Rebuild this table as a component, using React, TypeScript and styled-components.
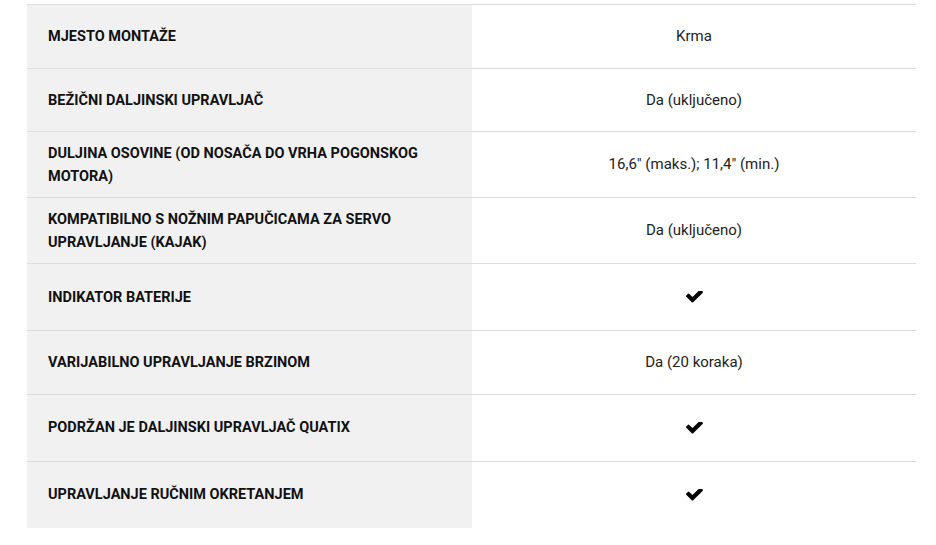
import React from "react";
import styled, { createGlobalStyle } from "styled-components";

const GlobalStyle = createGlobalStyle`
  body {
    margin: 0;
    background: #fff;
    font-family: Roboto, "Liberation Sans", Arial, sans-serif;
  }
`;

type Spec = { label: string; value?: string; check?: boolean };

const specs: Spec[] = [
  { label: "Mjesto montaže", value: "Krma" },
  { label: "Bežični daljinski upravljač", value: "Da (uključeno)" },
  { label: "Duljina osovine (od nosača do vrha pogonskog motora)", value: "16,6\" (maks.); 11,4\" (min.)" },
  { label: "Kompatibilno s nožnim papučicama za servo upravljanje (kajak)", value: "Da (uključeno)" },
  { label: "Indikator baterije", check: true },
  { label: "Varijabilno upravljanje brzinom", value: "Da (20 koraka)" },
  { label: "Podržan je daljinski upravljač Quatix", check: true },
  { label: "Upravljanje ručnim okretanjem", check: true },
];

const CheckIcon = () => (
  <svg width="17" height="14" viewBox="120 500 1560 1200" aria-hidden="true">
    <path
      fill="#000"
      d="M1671 566q0 40-28 68l-724 724-136 136q-28 28-68 28t-68-28l-136-136-362-362q-28-28-28-68t28-68l136-136q28-28 68-28t68 28l294 295 656-657q28-28 68-28t68 28l136 136q28 28 28 68z"
    />
  </svg>
);

const App = () => {
  return (
    <>
      <GlobalStyle />
      <Page>
        <Table>
          {specs.map((s, i) => (
            <Row key={i} $last={i === specs.length - 1}>
              <Label $tall={!!s.check}>{s.label}</Label>
              <Value $tall={!!s.check}>{s.check ? <CheckIcon /> : s.value}</Value>
            </Row>
          ))}
        </Table>
      </Page>
    </>
  );
};

const Page = styled.div`
  padding: 4px 20px 0 27px;
`;

const Table = styled.div`
  width: 889px;
  border-top: 1px solid #dcdcdc;
`;

const Row = styled.div<{ $last: boolean }>`
  display: grid;
  grid-template-columns: 445px 444px;
  border-bottom: 1px solid ${(p) => (p.$last ? "transparent" : "#dcdcdc")};
`;

const Label = styled.div<{ $tall: boolean }>`
  background: #f1f1f1;
  padding: 11px 40px 9px 21px;
  min-height: ${(p) => (p.$tall ? 46 : 42.5)}px;
  display: flex;
  align-items: center;
  font-size: 14.5px;
  line-height: 22.5px;
  font-weight: 700;
  text-transform: uppercase;
  color: #111;
`;

const Value = styled.div<{ $tall: boolean }>`
  padding: ${(p) => (p.$tall ? "11px 20px 9px" : "10px 20px")};
  min-height: ${(p) => (p.$tall ? 46 : 42.5)}px;
  display: flex;
  align-items: center;
  justify-content: center;
  text-align: center;
  font-size: 15px;
  line-height: 22.5px;
  color: #222;
`;

export default App;
